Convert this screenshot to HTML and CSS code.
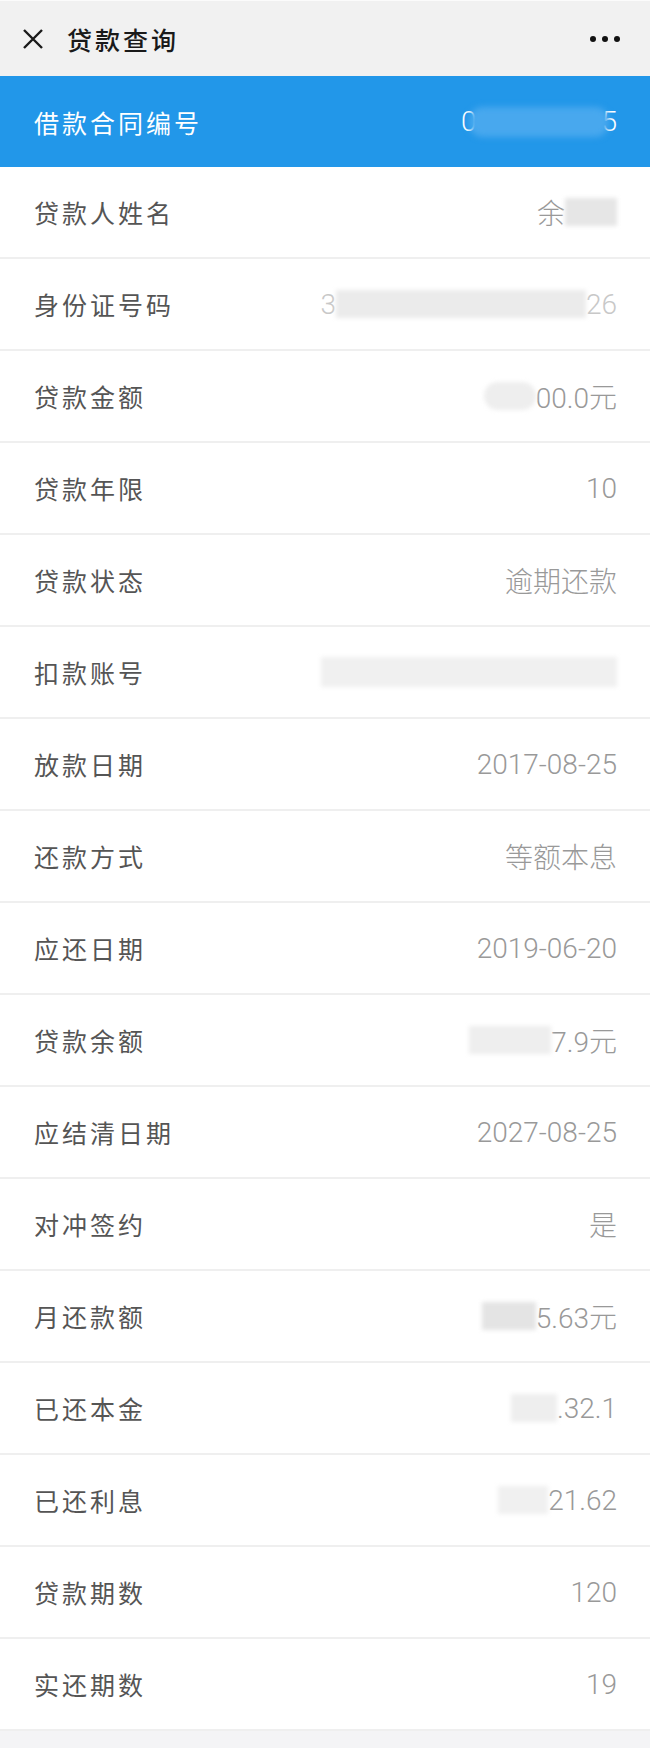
FILE: index.html
```html
<!DOCTYPE html>
<html lang="zh-CN">
<head>
    <meta charset="UTF-8">
    <meta name="viewport" content="width=device-width, initial-scale=1.0">
    <title>贷款查询</title>
    <link rel="stylesheet" href="styles.css">
</head>
<body>
    <div class="barra">
        <svg class="cerrar" width="22" height="22" viewBox="0 0 22 22" aria-label="关闭">
            <path d="M2 2 L20 20 M20 2 L2 20" stroke="#1a1a1a" stroke-width="2.4" fill="none"/>
        </svg>
        <h1 class="titulo">贷款查询</h1>
        <div class="mas"><span></span><span></span><span></span></div>
    </div>

    <div class="lista">
        <div class="fila destacada">
            <span class="etiqueta">借款合同编号</span>
            <span class="valor">0<span class="mancha azul m-contrato"></span>5</span>
        </div>
        <div class="fila">
            <span class="etiqueta">贷款人姓名</span>
            <span class="valor">余<span class="mancha m-nombre"></span></span>
        </div>
        <div class="fila">
            <span class="etiqueta">身份证号码</span>
            <span class="valor tenue">3<span class="mancha m-id"></span>26</span>
        </div>
        <div class="fila">
            <span class="etiqueta">贷款金额</span>
            <span class="valor"><span class="mancha m-monto"></span>00.0元</span>
        </div>
        <div class="fila">
            <span class="etiqueta">贷款年限</span>
            <span class="valor">10</span>
        </div>
        <div class="fila">
            <span class="etiqueta">贷款状态</span>
            <span class="valor">逾期还款</span>
        </div>
        <div class="fila">
            <span class="etiqueta">扣款账号</span>
            <span class="valor"><span class="mancha m-cuenta"></span></span>
        </div>
        <div class="fila">
            <span class="etiqueta">放款日期</span>
            <span class="valor">2017-08-25</span>
        </div>
        <div class="fila">
            <span class="etiqueta">还款方式</span>
            <span class="valor">等额本息</span>
        </div>
        <div class="fila">
            <span class="etiqueta">应还日期</span>
            <span class="valor">2019-06-20</span>
        </div>
        <div class="fila">
            <span class="etiqueta">贷款余额</span>
            <span class="valor"><span class="mancha m-saldo"></span>7.9元</span>
        </div>
        <div class="fila">
            <span class="etiqueta">应结清日期</span>
            <span class="valor">2027-08-25</span>
        </div>
        <div class="fila">
            <span class="etiqueta">对冲签约</span>
            <span class="valor">是</span>
        </div>
        <div class="fila">
            <span class="etiqueta">月还款额</span>
            <span class="valor"><span class="mancha m-cuota"></span>5.63元</span>
        </div>
        <div class="fila">
            <span class="etiqueta">已还本金</span>
            <span class="valor"><span class="mancha m-capital"></span>.32.1</span>
        </div>
        <div class="fila">
            <span class="etiqueta">已还利息</span>
            <span class="valor"><span class="mancha m-interes"></span>21.62</span>
        </div>
        <div class="fila">
            <span class="etiqueta">贷款期数</span>
            <span class="valor">120</span>
        </div>
        <div class="fila">
            <span class="etiqueta">实还期数</span>
            <span class="valor">19</span>
        </div>
    </div>
</body>
</html>
```

FILE: styles.css
```css
body {
    margin: 0;
    background: #f4f4f6;
    font-family: "Noto Sans CJK SC", sans-serif;
}

.barra {
    height: 75px;
    border-top: 1px solid #fbfbfb;
    background: #f1f1f1;
    display: flex;
    align-items: center;
    padding: 0 30px 0 22px;
}

.cerrar {
    display: block;
    margin-right: 23px;
}

.titulo {
    flex: 1;
    margin: 0;
    font-size: 25px;
    font-weight: 500;
    letter-spacing: 3px;
    color: #1a1a1a;
}

.mas {
    display: flex;
    gap: 6px;
}

.mas span {
    width: 6px;
    height: 6px;
    border-radius: 50%;
    background: #111;
}

.lista {
    background: #fff;
}

.fila {
    height: 90px;
    border-bottom: 2px solid #efefef;
    display: flex;
    align-items: center;
    justify-content: space-between;
    padding: 0 33px 0 34px;
}

.fila.destacada {
    height: 91px;
    border-bottom: none;
    background: #2297e9;
}

.etiqueta {
    font-size: 25px;
    letter-spacing: 3px;
    color: #555;
}

.destacada .etiqueta,
.destacada .valor {
    color: #fff;
}

.valor {
    display: flex;
    align-items: center;
    font-family: "Roboto", "Noto Sans CJK SC", sans-serif;
    font-weight: 300;
    font-size: 28px;
    color: #999;
}

.valor.tenue {
    color: #c8c8c8;
}

.mancha {
    display: inline-block;
    height: 28px;
    background: #ebebeb;
    filter: blur(2px);
}

.mancha.azul {
    position: relative;
    z-index: 1;
    height: 30px;
    margin: 0 -8px 0 -7px;
    background: #48a8ee;
    border-radius: 14px;
    filter: blur(3px);
}

.m-contrato { width: 140px; }
.m-nombre { width: 52px; background: #e6e6e6; }
.m-id { width: 250px; }
.m-monto { width: 52px; border-radius: 14px; background: #eeeeee; }
.m-cuenta { width: 296px; height: 30px; background: #f0f0f0; }
.m-saldo { width: 82px; background: #eeeeee; }
.m-cuota { width: 54px; background: #e4e4e4; }
.m-capital { width: 46px; background: #eeeeee; }
.m-interes { width: 50px; background: #f0f0f0; }
```
